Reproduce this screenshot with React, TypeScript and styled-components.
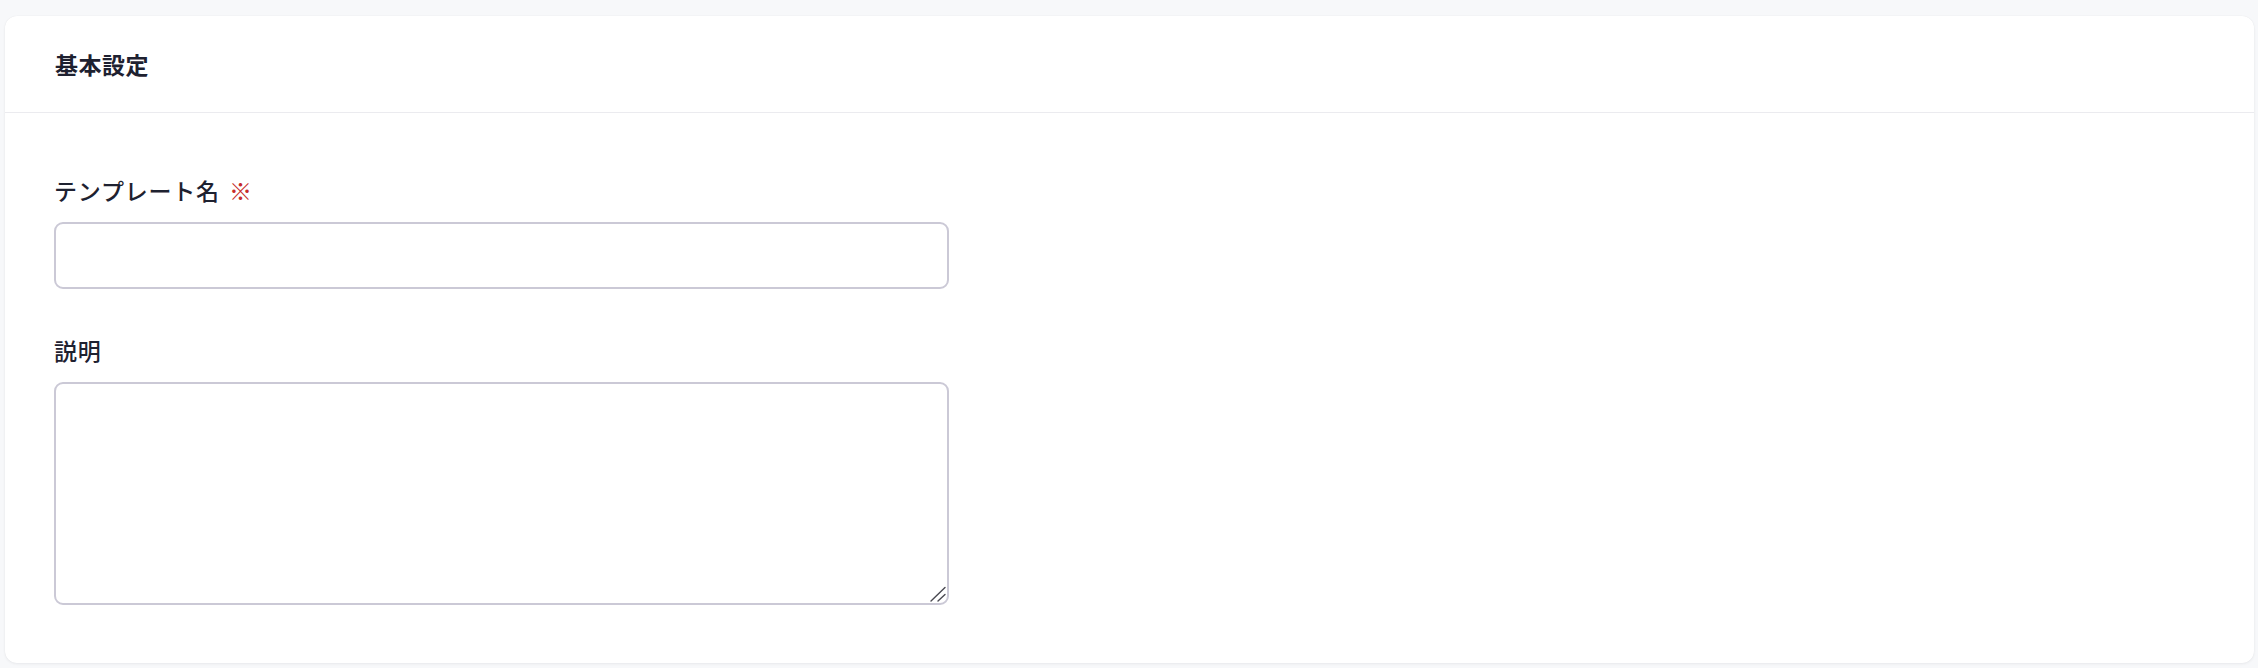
import React from "react";
import styled, { createGlobalStyle } from "styled-components";

const Global = createGlobalStyle`
  html, body {
    margin: 0;
    padding: 0;
    background: #f7f8fa;
    font-family: "Noto Sans CJK JP", "Noto Sans", sans-serif;
    color: #1e2130;
  }
  * { box-sizing: border-box; }
`;

const Page = styled.div`
  padding: 16px 4px 5px 5px;
`;

const Card = styled.section`
  background: #ffffff;
  border-radius: 12px;
  box-shadow: 0 1px 3px rgba(20, 24, 40, 0.06), 0 0 1px rgba(20, 24, 40, 0.08);
`;

const CardHeader = styled.header`
  height: 97px;
  display: flex;
  align-items: center;
  padding: 0 50px;
  border-bottom: 1px solid #ebebef;
`;

const Title = styled.h2`
  margin: 0;
  font-size: 23px;
  font-weight: 700;
  line-height: 1.4;
  letter-spacing: 0.5px;
  color: #1e2130;
`;

const CardBody = styled.div`
  padding: 60px 49px 58px;
  display: flex;
  flex-direction: column;
  gap: 44px;
`;

const Field = styled.div`
  display: flex;
  flex-direction: column;
  gap: 15px;
  width: 895px;
`;

const Label = styled.label`
  font-size: 23px;
  font-weight: 500;
  line-height: 34px;
  letter-spacing: 0.8px;
  color: #1e2130;
`;

const Required = styled.span`
  color: #c62a2a;
  margin-left: 9px;
  font-weight: 400;
`;

const TextInput = styled.input`
  height: 67px;
  width: 100%;
  border: 2px solid #cbc9d6;
  border-radius: 9px;
  background: #fff;
  font: inherit;
  font-size: 23px;
  padding: 0 16px;
  outline: none;
`;

const AreaWrap = styled.div`
  position: relative;
  width: 100%;
`;

const TextArea = styled.textarea`
  height: 223px;
  width: 100%;
  border: 2px solid #cbc9d6;
  border-radius: 9px;
  background: #fff;
  font: inherit;
  font-size: 23px;
  padding: 12px 16px;
  outline: none;
  resize: none;
  display: block;
`;

const Grip = styled.svg`
  position: absolute;
  right: 3px;
  bottom: 3px;
  width: 16px;
  height: 16px;
  pointer-events: none;
`;

export default function App() {
  return (
    <Page>
      <Global />
      <Card>
        <CardHeader>
          <Title>基本設定</Title>
        </CardHeader>
        <CardBody>
          <Field>
            <Label htmlFor="name">
              テンプレート名<Required>※</Required>
            </Label>
            <TextInput id="name" type="text" />
          </Field>
          <Field>
            <Label htmlFor="desc">説明</Label>
            <AreaWrap>
              <TextArea id="desc" />
              <Grip viewBox="0 0 16 16" aria-hidden="true">
                <line x1="1" y1="15" x2="15" y2="1.5" stroke="#4a4a52" strokeWidth="1.4" strokeLinecap="round" />
                <line x1="8" y1="15" x2="15" y2="8.5" stroke="#4a4a52" strokeWidth="1.4" strokeLinecap="round" />
              </Grip>
            </AreaWrap>
          </Field>
        </CardBody>
      </Card>
    </Page>
  );
}
